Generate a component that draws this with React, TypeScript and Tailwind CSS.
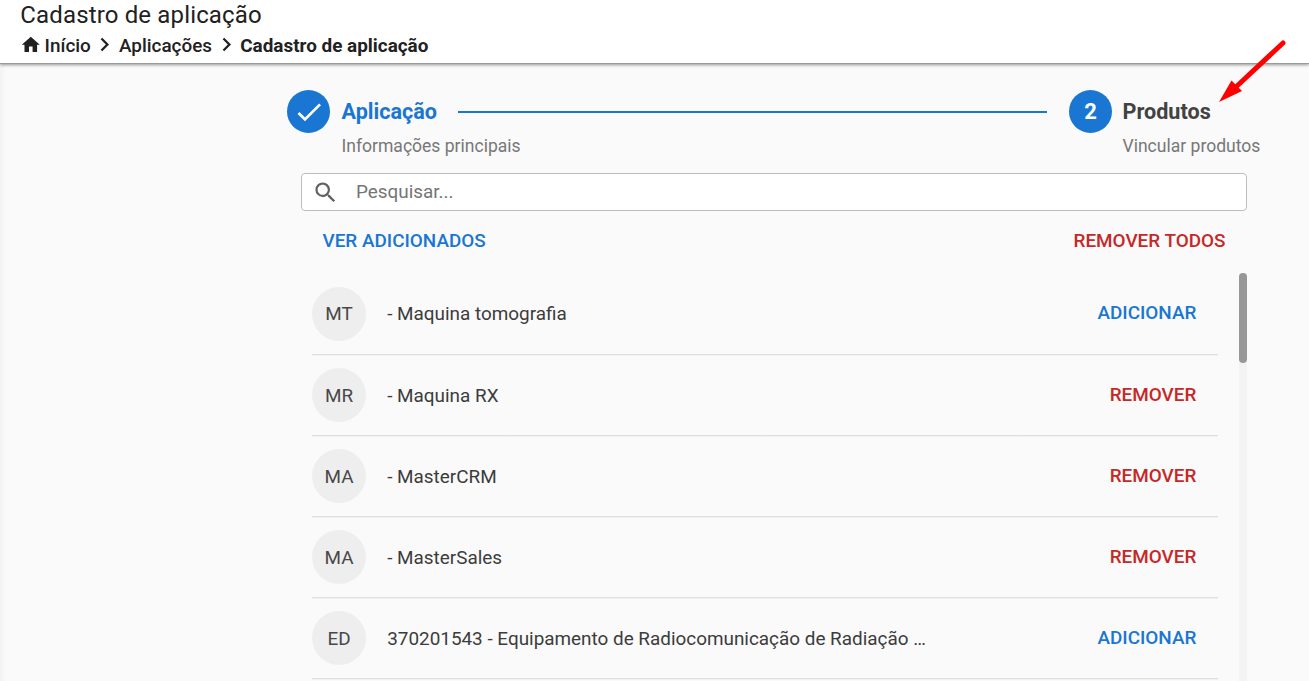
import { MdCheck, MdChevronRight, MdHome, MdSearch } from 'react-icons/md';

interface Product {
  initials: string;
  name: string;
  added: boolean;
}

const products: Product[] = [
  { initials: 'MT', name: '- Maquina tomografia', added: false },
  { initials: 'MR', name: '- Maquina RX', added: true },
  { initials: 'MA', name: '- MasterCRM', added: true },
  { initials: 'MA', name: '- MasterSales', added: true },
  { initials: 'ED', name: '370201543 - Equipamento de Radiocomunicação de Radiação …', added: false },
];

function Header() {
  return (
    <header className="relative z-10 h-16 shrink-0 border-b border-[#9a9a9a] bg-white pl-[20.3px] text-[#212121] shadow-[0_1px_3px_rgba(0,0,0,0.4)]">
      <h1 className="h-[30px] text-[24px] leading-[30px] tracking-[0.15px]">Cadastro de aplicação</h1>
      <nav className="flex h-[31px] items-center text-[18.9px] font-medium">
        <MdHome className="mb-[2px] mr-[2.7px] size-[21.6px]" />
        <a className="pt-[1px]">Início</a>
        <MdChevronRight className="mx-[0.6px] mb-[2px] size-[27px]" />
        <a className="pt-[1px]">Aplicações</a>
        <MdChevronRight className="mx-[0.6px] mb-[2px] size-[27px]" />
        <span className="pt-[1px] font-bold">Cadastro de aplicação</span>
      </nav>
    </header>
  );
}

function Stepper() {
  return (
    <div className="flex h-[84px] pl-[287px] pr-[49px]">
      <div className="flex w-[150px] shrink-0">
        <span className="flex size-[43px] shrink-0 items-center justify-center rounded-full bg-[#1976d2] text-white">
          <MdCheck className="size-[32px]" />
        </span>
        <div className="ml-[11.5px] whitespace-nowrap">
          <div className="h-[43px] text-[21.6px] font-bold leading-[43px] text-[#1976d2]">Aplicação</div>
          <div className="text-[17.55px] leading-[26px] text-[#777]">Informações principais</div>
        </div>
      </div>
      <div className="ml-[21px] mr-[22px] mt-[21px] h-[2px] flex-1 bg-[#1976d2]" />
      <div className="flex shrink-0">
        <span className="flex size-[43px] shrink-0 items-center justify-center rounded-full bg-[#1976d2] text-[22px] font-bold text-white">
          2
        </span>
        <div className="ml-[10.5px] w-[137.5px] whitespace-nowrap">
          <div className="h-[43px] text-[21.6px] font-bold leading-[43px] text-[#424242]">Produtos</div>
          <div className="text-[17.55px] leading-[26px] text-[#777]">Vincular produtos</div>
        </div>
      </div>
    </div>
  );
}

function ProductRow({ product }: { product: Product }) {
  return (
    <li className="group flex h-[81px] shrink-0 items-center border-b border-[#dedede] shadow-[0_1px_0_#f1f1f1]">
      <span className="flex size-[54px] items-center justify-center rounded-full bg-[#eee] pt-[2px] text-[18.9px] text-[#484848] group-first:pt-0">
        {product.initials}
      </span>
      <span className="ml-[21.2px] flex-1 pt-[2px] text-[18.9px] text-[#3c3c3c] group-first:pt-0">{product.name}</span>
      <button
        className={`mr-[21.7px] text-[18.9px] font-medium group-first:pb-[2px] ${product.added ? 'text-[#c62828]' : 'text-[#1976d2]'}`}
      >
        {product.added ? 'REMOVER' : 'ADICIONAR'}
      </button>
    </li>
  );
}

export default function App() {
  return (
    <div className="relative flex h-[681px] w-[1309px] flex-col overflow-hidden bg-[#fafafa] font-[Roboto,sans-serif]">
      <Header />
      <main className="flex min-h-0 flex-1 flex-col bg-linear-to-r from-[#f3f3f3] to-[#fafafa] to-[6px] pt-[26px]">
        <Stepper />
        <div className="ml-[301px] mt-[-1px] flex h-[38px] w-[946px] shrink-0 items-center rounded-[4px] border border-[#bdbdbd] bg-white pl-[9.5px]">
          <MdSearch className="size-[27px] text-[#616161]" />
          <input
            className="ml-[17.5px] flex-1 bg-transparent text-[18.9px] text-[#424242] outline-none placeholder:text-[#757575]"
            placeholder="Pesquisar..."
          />
        </div>
        <div className="ml-[322.5px] mr-[83.5px] flex h-[62px] shrink-0 justify-between text-[18.9px] font-medium leading-[60px]">
          <button className="h-[60px] text-[#1976d2]">VER ADICIONADOS</button>
          <button className="h-[60px] text-[#c62828]">REMOVER TODOS</button>
        </div>
        <div className="ml-[312px] flex w-[935px] min-h-0 flex-1 justify-between">
          <ul className="flex w-[906px] flex-col overflow-hidden pt-[1px]">
            {products.map((product, index) => (
              <ProductRow key={index} product={product} />
            ))}
          </ul>
          <div className="w-2 bg-[#f3f3f3]">
            <div className="h-[90px] rounded-full bg-[#979797]" />
          </div>
        </div>
      </main>
      {/* red callout arrow pointing at the second step */}
      <svg className="absolute left-[1215px] top-[36px] z-20" width="76" height="70" viewBox="0 0 76 70">
        <path d="M68 7L22 50" stroke="#f00" strokeWidth="5" strokeLinecap="round" />
        <path d="M4 66L16.5 44.5L27 55Z" fill="#f00" />
      </svg>
    </div>
  );
}
